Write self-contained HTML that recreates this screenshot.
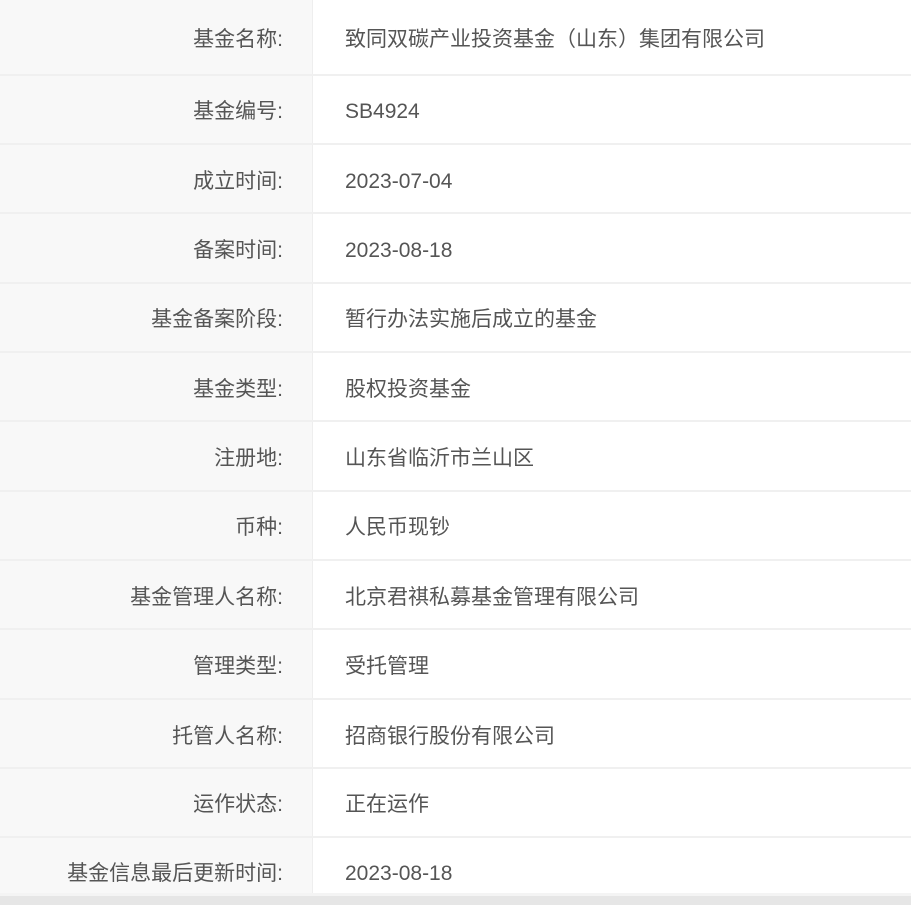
<!DOCTYPE html>
<html><head><meta charset="utf-8"><style>
*{margin:0;padding:0;box-sizing:border-box}
body{width:911px;height:905px;background:#fff;position:relative;overflow:hidden;font-family:"Liberation Sans","Noto Sans CJK SC",sans-serif;font-size:21px;color:#555}
.lab{position:absolute;left:0;width:313px;background:#f8f8f8;border-right:1px solid #eee;}
.r{position:absolute;left:0;width:911px;height:70px;border-bottom:2px solid #f0f0f0}
.l{position:absolute;right:628px;text-align:right;white-space:nowrap;line-height:24px;margin-top:2px}
.v{position:absolute;left:345px;white-space:nowrap;line-height:24px;margin-top:2px}
.bar{position:absolute;left:0;top:893px;width:911px;height:12px;background:#e6e6e6;border-top:3px solid #f4f4f4}
</style></head><body>
<div class="lab" style="top:0;height:893px"></div>
<div class="r" style="top:0;height:76px"></div>
<div class="r" style="top:76px;height:69px"></div>
<div class="r" style="top:145px;height:69px"></div>
<div class="r" style="top:214px;height:70px"></div>
<div class="r" style="top:284px;height:69px"></div>
<div class="r" style="top:353px;height:69px"></div>
<div class="r" style="top:422px;height:70px"></div>
<div class="r" style="top:492px;height:69px"></div>
<div class="r" style="top:561px;height:69px"></div>
<div class="r" style="top:630px;height:70px"></div>
<div class="r" style="top:700px;height:69px"></div>
<div class="r" style="top:769px;height:69px"></div>

<div class="l" style="top:26px">基金名称:</div><div class="v" style="top:26px">致同双碳产业投资基金（山东）集团有限公司</div>
<div class="l" style="top:98px">基金编号:</div><div class="v" style="top:98px">SB4924</div>
<div class="l" style="top:168px">成立时间:</div><div class="v" style="top:168px">2023-07-04</div>
<div class="l" style="top:237px">备案时间:</div><div class="v" style="top:237px">2023-08-18</div>
<div class="l" style="top:306px">基金备案阶段:</div><div class="v" style="top:306px">暂行办法实施后成立的基金</div>
<div class="l" style="top:376px">基金类型:</div><div class="v" style="top:376px">股权投资基金</div>
<div class="l" style="top:445px">注册地:</div><div class="v" style="top:445px">山东省临沂市兰山区</div>
<div class="l" style="top:514px">币种:</div><div class="v" style="top:514px">人民币现钞</div>
<div class="l" style="top:584px">基金管理人名称:</div><div class="v" style="top:584px">北京君祺私募基金管理有限公司</div>
<div class="l" style="top:653px">管理类型:</div><div class="v" style="top:653px">受托管理</div>
<div class="l" style="top:723px">托管人名称:</div><div class="v" style="top:723px">招商银行股份有限公司</div>
<div class="l" style="top:791px">运作状态:</div><div class="v" style="top:791px">正在运作</div>
<div class="l" style="top:860px">基金信息最后更新时间:</div><div class="v" style="top:860px">2023-08-18</div>
<div class="bar"></div>
</body></html>
